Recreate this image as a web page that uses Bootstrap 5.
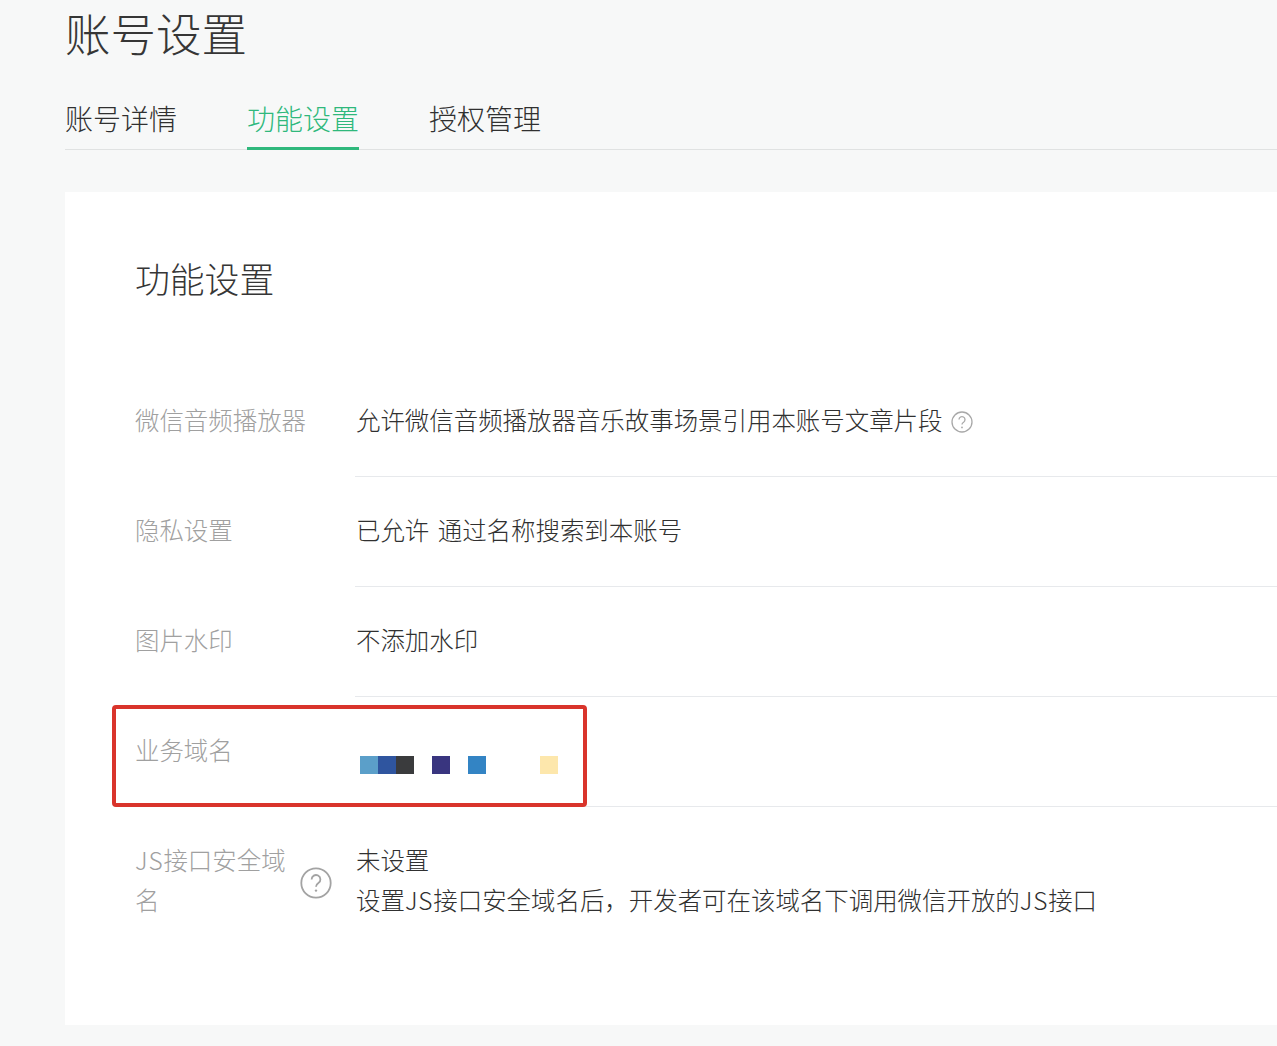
<!DOCTYPE html>
<html lang="zh-CN">
<head>
<meta charset="utf-8">
<title>账号设置</title>
<link rel="stylesheet" href="https://cdn.jsdelivr.net/npm/bootstrap@5.3.0/dist/css/bootstrap.min.css">
<style>
html,body{height:1046px;overflow:hidden}
body{background:#f7f8f8;font-family:"Noto Sans CJK SC","Liberation Sans",sans-serif;color:#303030;font-weight:300}
.shell{padding-left:65px}
.page-title{font-size:45.5px;line-height:60px;margin:2px 0 0;font-weight:300;color:#363636}
.tabs-bar{margin-top:34px;height:54px;border-bottom:1px solid #e0e2e2;gap:70px}
.tab-link{font-size:28px;line-height:40px;height:54px;padding:2px 0 0;color:#303030;border-bottom:3px solid transparent}
.tab-link.active{color:#2fb87c;border-bottom-color:#2fb87c}
.panel{margin-top:42px;height:833px;background:#fff;border:0;border-radius:0;padding:0 0 0 70px}
.panel-title{font-size:34.8px;line-height:48px;margin:62px 0 0;font-weight:300;color:#363636}
.rows{margin-top:65px}
.item{position:relative;font-size:24.45px;line-height:40px}
.item-label{flex:0 0 220px;width:220px;padding:0 48px 0 0;color:#a0a0a0;position:relative;margin:33px 0 37px}
.item-value{flex:1 1 auto;padding:33px 0 37px 1px;border-bottom:1px solid #e7e9ec;height:110px;word-spacing:3px}
.item-last .item-value{border-bottom:0;height:auto}
.latin{letter-spacing:.8px}
.tip{display:inline-block;vertical-align:-3px;margin-left:8px}
.tip-side{position:absolute;left:165px;top:27px}
.blur-row{padding-top:26px;padding-left:4px;height:40px}
.blur-cell{width:18px;height:18px;display:block}
.blur-gap{margin-left:18px}
.blur-gap2{margin-left:54px}
.c1{background:#5b9fc9}.c2{background:#2f559f}.c3{background:#3a3b3d}.c4{background:#39357f}.c5{background:#3384c4}.c6{background:#fde7ac}
.marker{position:absolute;left:-23px;top:8px;width:475px;height:102px;border:4px solid #d9342b;border-radius:4px;pointer-events:none}
</style>
</head>
<body>
<div class="shell">
  <h1 class="page-title">账号设置</h1>
  <nav class="nav tabs-bar">
    <a class="nav-link tab-link" href="#">账号详情</a>
    <a class="nav-link tab-link active" href="#">功能设置</a>
    <a class="nav-link tab-link" href="#">授权管理</a>
  </nav>
  <div class="card panel">
    <h2 class="panel-title">功能设置</h2>
    <div class="rows">
      <div class="item d-flex">
        <div class="item-label">微信音频播放器</div>
        <div class="item-value">允许微信音频播放器音乐故事场景引用本账号文章片段<svg class="tip" width="22" height="22" viewBox="0 0 22 22" fill="none" stroke="#a8a8a8"><circle cx="11" cy="11" r="10" stroke-width="1.3"/><path d="M8 8.6a3 3 0 1 1 4.6 2.6c-1 .6-1.6 1.2-1.6 2.4" stroke-width="1.3"/><circle cx="11" cy="16.4" r=".9" fill="#a8a8a8" stroke="none"/></svg></div>
      </div>
      <div class="item d-flex">
        <div class="item-label">隐私设置</div>
        <div class="item-value">已允许 通过名称搜索到本账号</div>
      </div>
      <div class="item d-flex">
        <div class="item-label">图片水印</div>
        <div class="item-value">不添加水印</div>
      </div>
      <div class="item d-flex">
        <div class="item-label">业务域名</div>
        <div class="item-value"><div class="blur-row d-flex"><span class="blur-cell c1"></span><span class="blur-cell c2"></span><span class="blur-cell c3"></span><span class="blur-cell c4 blur-gap"></span><span class="blur-cell c5 blur-gap"></span><span class="blur-cell c6 blur-gap2"></span></div></div>
        <div class="marker"></div>
      </div>
      <div class="item item-last d-flex">
        <div class="item-label"><span class="latin">JS</span>接口安全域名<svg class="tip-side" width="32" height="32" viewBox="0 0 32 32" fill="none" stroke="#a3a3a3"><circle cx="16" cy="16" r="14.7" stroke-width="1.8"/><path d="M11.6 12.4a4.4 4.4 0 1 1 6.8 3.7c-1.5 1-2.4 1.8-2.4 3.6" stroke-width="1.8"/><circle cx="16" cy="23.6" r="1.2" fill="#a3a3a3" stroke="none"/></svg></div>
        <div class="item-value">未设置<br>设置<span class="latin">JS</span>接口安全域名后，开发者可在该域名下调用微信开放的<span class="latin">JS</span>接口</div>
      </div>
    </div>
  </div>
</div>
<script src="https://cdn.jsdelivr.net/npm/bootstrap@5.3.0/dist/js/bootstrap.bundle.min.js"></script>
</body>
</html>
